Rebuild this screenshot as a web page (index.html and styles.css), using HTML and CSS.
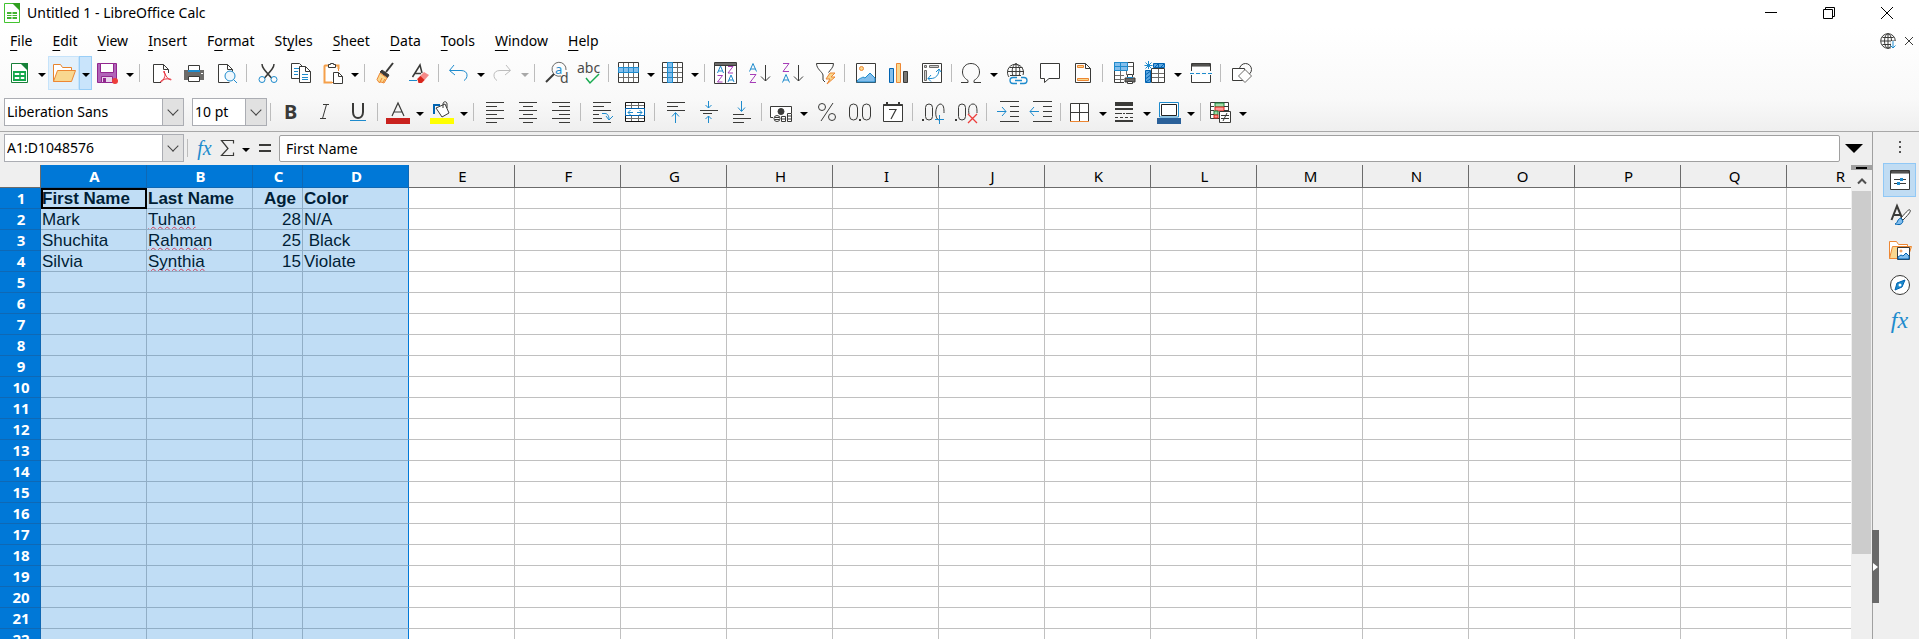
FILE: index.html
```html
<!DOCTYPE html>
<html lang="en">
<head>
<meta charset="utf-8">
<title>Untitled 1 - LibreOffice Calc</title>
<link rel="stylesheet" href="styles.css">
</head>
<body>
<header class="top">
  <div class="titlebar">
    <svg class="ic app-icon" viewBox="0 0 16 20"><path d="M.5.5h9l6 6v13H.5z" fill="#fff" stroke="#43c330"/><path d="M8 0h8v8z" fill="#2f9e1f" stroke="none"/><path d="M3 9h10v7H3z" fill="#43b330" stroke="none"/><path d="M3 11.500h10M3 13.500h10M8 9v7" stroke="#fff"/></svg>
    <h1 class="title">Untitled 1 - LibreOffice Calc</h1>
    <div class="window-buttons">
      <button aria-label="Minimize"><svg class="ic win" viewBox="0 0 14 14"><path d="M1 6.500h12"/></svg></button>
      <button aria-label="Restore"><svg class="ic win" viewBox="0 0 14 14"><path d="M1.500 3.500h9v9h-9zM3.500 3V1.500h9v9H11"/></svg></button>
      <button aria-label="Close"><svg class="ic win" viewBox="0 0 14 14"><path d="M1 1l12 12M13 1L1 13"/></svg></button>
    </div>
  </div>
  <div class="menubar">
    <nav class="menus">
      <button><u>F</u>ile</button><button><u>E</u>dit</button><button><u>V</u>iew</button><button><u>I</u>nsert</button><button>F<u>o</u>rmat</button><button>St<u>y</u>les</button><button><u>S</u>heet</button><button><u>D</u>ata</button><button><u>T</u>ools</button><button><u>W</u>indow</button><button><u>H</u>elp</button>
    </nav>
    <div class="doc-buttons">
      <button aria-label="Update available"><svg class="ic small" viewBox="0 0 16 16"><circle cx="8" cy="8" r="7.300"/><ellipse cx="8" cy="8" rx="3.500" ry="7.300"/><path d="M1 8h14M2.500 4.500h11M2.500 11.500h11M8 1v14"/><path d="M11 8h5v8h-5z" fill="#fdfdfd" stroke="none"/><path class="b" d="M13 8v7M10.500 12.500L13 15l2.500-2.500"/></svg></button>
      <button aria-label="Close document"><svg class="ic tiny" viewBox="0 0 10 10"><path d="M1 1l8 8M9 1L1 9"/></svg></button>
    </div>
  </div>

  <div class="toolbar">
    <button class="tool" aria-label="New"><svg class="ic" viewBox="0 0 24 24"><path d="M3.500 2.500h10l6 6v13h-16z" fill="#fff" stroke="#188038"/><path d="M12 2h8v8z" fill="#18813a" stroke="none"/><path d="M5 10h13v10H5z" fill="#12a84b" stroke="none"/><path d="M7 12.500h4v1H7zM13 12.500h3v1h-3zM7 16.500h4v1H7zM13 16.500h3v1h-3z" stroke="#fff" fill="#fff"/></svg></button><button class="drop" aria-label="New options"></button>
    <button class="tool hot" aria-label="Open"><svg class="ic" viewBox="0 0 24 24"><path d="M1.500 20.500v-17h7l2 3h9v3" fill="#fff" stroke="#e8842c"/><path d="M5.500 9.500h18l-4 11h-18z" fill="#f9d78f" stroke="#ed8733"/></svg></button><button class="drop hot-drop" aria-label="Open options"></button>
    <button class="tool" aria-label="Save"><svg class="ic" viewBox="0 0 24 24"><path d="M1.500 2.500h19v19h-19z" fill="#b164b8" stroke="#92278f"/><path d="M4.500 2.500h13v9h-13z" fill="#fff" stroke="#92278f"/><path d="M5.500 15.500h11v6h-11z" fill="#e9d5ec" stroke="#92278f"/><path d="M7 17h3v4H7z" fill="#92278f" stroke="none"/><circle cx="19" cy="20" r="3" fill="#ed3d3b" stroke="none"/></svg></button><button class="drop" aria-label="Save options"></button>
    <i class="sep"></i>
    <button class="tool" aria-label="Export as PDF"><svg class="ic" viewBox="0 0 24 24"><path d="M12 21.500H4.500v-18h10l5 5V12M14.500 3.500v5h5" fill="#fff"/><path d="M15 12c3 0-1 9-3 9s2-4 9-3c4 1-3 3-6-8z" stroke="#e9303c"/></svg></button>
    <button class="tool" aria-label="Print"><svg class="ic" viewBox="0 0 24 24"><path d="M6.500 10v-5.500h11V10" fill="#fff"/><path d="M2 9h20v10H2z" fill="#6c6b69" stroke="none"/><path d="M6 9h12v2H6z" fill="#1e8bcd" stroke="none"/><path d="M19 12.500h2" stroke="#fff"/><path d="M6.500 15.500h11v5h-11z" fill="#fff"/></svg></button>
    <button class="tool" aria-label="Print preview"><svg class="ic" viewBox="0 0 24 24"><path d="M17.500 11V8.500l-5-5h-9v18h11M12.500 3.500v5h5" fill="#fff"/><circle cx="15" cy="15" r="5" fill="#eef7fd" stroke="#1e8bcd"/><path class="b" d="M18.500 18.500l3.500 3.500"/></svg></button>
    <i class="sep"></i>
    <button class="tool" aria-label="Cut"><svg class="ic" viewBox="0 0 24 24"><path d="M6 3c0 3 1.500 5 9.500 14M18 3c0 3-1.500 5-9.500 14" stroke-width="1.500"/><circle class="b" cx="6" cy="18.500" r="3"/><circle class="b" cx="18" cy="18.500" r="3"/></svg></button>
    <button class="tool" aria-label="Copy"><svg class="ic" viewBox="0 0 24 24"><path d="M2.500 2.500h8l4 4v11h-12z" fill="#fff"/><path class="b" d="M5 7.500h6M5 10.500h4M5 13.500h4"/><path d="M10.500 5.500h6l5 5v11h-11z" fill="#fff"/><path d="M16.500 5.500v5h5"/><path class="b" d="M13 13.500h6M13 16.500h6M13 18.500h6"/></svg></button>
    <button class="tool short" aria-label="Paste"><svg class="ic" viewBox="0 0 24 24"><path d="M12 21.500H3.500v-17h14V10" fill="#fff" stroke="#ed8733"/><path d="M3.500 4.500h14V8M3.500 4.500v17H11" stroke="#f5a04a" stroke-width="2"/><path d="M7.500 6.500v-3h2v-1h3v1h2v3z" fill="#fff"/><path d="M12.500 11.500h5l4 4v7h-9z" fill="#fff"/><path d="M17.500 11.500v4h4"/></svg></button><button class="drop" aria-label="Paste options"></button>
    <i class="sep"></i>
    <button class="tool" aria-label="Clone formatting"><svg class="ic" viewBox="0 0 24 24"><path d="M19 2l-7 9" stroke-width="2"/><path d="M8 9l7 5-1.500 2.500L6 11z" fill="#3a3a38"/><path d="M6 12l7 5-3 5-3-1-2 .5-2-3z" fill="#f9d78f" stroke="#ed8733"/><path d="M8 17l-2 4M11 18l-2 3" stroke="#ed8733"/></svg></button>
    <button class="tool" aria-label="Clear direct formatting"><svg class="ic" viewBox="0 0 24 24"><path d="M5.500 16L13 4l2 8M8 12.500h6" stroke-width="1.500"/><path class="b" d="M2 19.500h8"/><path d="M10 18l7-7 5 3-7 8h-3z" fill="#f58a88" stroke="none"/><path d="M10.500 18l3-3 4 4-3 3h-3z" fill="#d8261c" stroke="none"/></svg></button>
    <i class="sep"></i>
    <button class="tool" aria-label="Undo"><svg class="ic" viewBox="0 0 24 24"><path class="b" d="M7 4L2.500 9.500 8 14M3 9.500h11c8 0 7 8 3 10"/></svg></button><button class="drop" aria-label="Undo options"></button>
    <button class="tool" aria-label="Redo" disabled><svg class="ic" viewBox="0 0 24 24"><path d="M15 4l4.500 5.500L14 14M19 9.500H9c-8 0-7 8-3 10" stroke="#bdbdbd"/></svg></button><button class="drop dim" aria-label="Redo options" disabled></button>
    <i class="sep"></i>
    <button class="tool" aria-label="Find and replace"><svg class="ic" viewBox="0 0 24 24"><path d="M17 15a7 7 0 1 1 5-6" stroke="#6c6b69"/><path d="M10 13l-8 8" stroke-width="2"/><text x="11" y="13" class="blue-t t13">a</text><text x="16" y="22" class="t14">d</text></svg></button>
    <button class="tool" aria-label="Spelling"><svg class="ic" viewBox="0 0 24 24"><text x="0" y="12" class="t14">abc</text><path d="M9 17l4 5 9-9" stroke="#18ab50" stroke-width="1.500"/></svg></button>
    <i class="sep"></i>
    <button class="tool short" aria-label="Row"><svg class="ic" viewBox="0 0 24 24"><path d="M1.500 1.500h20v20h-20z" fill="#fff"/><path d="M6.500 2v19M11.500 2v19M16.500 2v19M2 16.500h19" stroke="#6c6b69"/><path d="M1.500 6.500h20v5h-20z" fill="#83beec" stroke="#1e8bcd"/><path d="M6.500 7v4M11.500 7v4M16.500 7v4" stroke="#1e8bcd"/></svg></button><button class="drop" aria-label="Row options"></button>
    <button class="tool short" aria-label="Column"><svg class="ic" viewBox="0 0 24 24"><path d="M1.500 1.500h20v20h-20z" fill="#fff"/><path d="M2 6.500h19M2 11.500h19M2 16.500h19M16.500 2v19" stroke="#6c6b69"/><path d="M6.500 1.500h5v20h-5z" fill="#83beec" stroke="#1e8bcd"/><path d="M7 6.500h4M7 11.500h4M7 16.500h4" stroke="#1e8bcd"/></svg></button><button class="drop" aria-label="Column options"></button>
    <i class="sep"></i>
    <button class="tool" aria-label="Sort"><svg class="ic" viewBox="0 0 24 24"><path d="M.500 1.500h22v21H.500z" fill="#fff"/><path d="M1 2h21v2H1z" fill="#6c6b69" stroke="none"/><path d="M11.500 4v18M.500 4.500h22"/><path class="b" d="M3.500 12l3-7 3 7M4.500 10h4M14 21l3-7 3 7M15 19h4"/><path class="p" d="M14 5.500h5l-5 6.500h5M3.500 14.500h5l-5 6.500h5"/></svg></button>
    <button class="tool" aria-label="Sort ascending"><svg class="ic" viewBox="0 0 24 24"><path class="b" d="M2.500 10.500l3.500-8 3.500 8M3.500 8h5"/><path class="p" d="M3 13.500h6L3 21.500h6"/><path d="M18.500 4v16M14 15.500l4.500 4.500 4.500-4.500"/></svg></button>
    <button class="tool" aria-label="Sort descending"><svg class="ic" viewBox="0 0 24 24"><path class="p" d="M3 2.500h6L3 10.500h6"/><path class="b" d="M2.500 21.500l3.500-8 3.500 8M3.500 19h5"/><path d="M18.500 4v16M14 15.500l4.500 4.500 4.500-4.500"/></svg></button>
    <button class="tool" aria-label="AutoFilter"><svg class="ic" viewBox="0 0 24 24"><path d="M12 21l-2-2v-5C9.500 11 3.500 8 3.500 2.500h17c0 4-3 6-5 9" fill="#fff"/><path d="M17 12l-4 6h4l-3 5 8-7h-4l4-4z" fill="#f9d78f" stroke="#ed8733"/></svg></button>
    <i class="sep"></i>
    <button class="tool" aria-label="Insert image"><svg class="ic" viewBox="0 0 24 24"><path d="M2.500 2.500h19v19h-19z" fill="#fff"/><path d="M3 21c0-3 5-4 6-5l2 1 5-5 5 5v4z" fill="#83beec" stroke="#1e8bcd"/><circle cx="7.500" cy="7.500" r="2" fill="#f9d78f" stroke="#ed8733"/></svg></button>
    <button class="tool" aria-label="Insert chart"><svg class="ic" viewBox="0 0 24 24"><path d="M2.500 7.500h4v14h-4z" fill="#83beec" stroke="#0063b1"/><path d="M9.500 2.500h4v19h-4z" fill="#f9d78f" stroke="#ed8733"/><path d="M16.500 10.500h4v11h-4z" fill="#797774"/></svg></button>
    <button class="tool" aria-label="Insert pivot table"><svg class="ic" viewBox="0 0 24 24"><path d="M2.500 2.500h19v19h-19z" fill="#fff"/><path d="M4.500 4.500h2v2h-2zM9.500 4.500h9v2h-9zM4.500 9.500h2v10h-2z" fill="#ccc" stroke="#6c6b69"/><path class="b" d="M8 17.500h3c5 0 8-4 8-9M16 11l3-3 2 3M11 14l-3 3.500 3 3"/></svg></button>
    <i class="sep"></i>
    <button class="tool" aria-label="Special character"><svg class="ic" viewBox="0 0 24 24"><path d="M1 21.500h7v-2C4 17 2.500 14 2.500 11 2.500 6 6 2.500 11 2.500s8.500 3.500 8.500 8.500c0 3-1.500 6-5.500 8.500v2h7"/></svg></button><button class="drop" aria-label="Character options"></button>
    <button class="tool" aria-label="Insert hyperlink"><svg class="ic" viewBox="0 0 24 24"><path d="M4 16a8 8 0 1 1 14-2M3 10.500h16M4.500 6.500h13M5 14.500h11M11 2.500V15M8 15C6 9 8 4 11 2.500 14 4 16 9 14 15"/><path class="b" d="M12 16.500H8a3 3 0 0 0 0 6h4M16 16.500h3a3 3 0 0 1 0 6h-4M10 19.500h7" stroke-width="1.300"/></svg></button>
    <button class="tool" aria-label="Insert comment"><svg class="ic" viewBox="0 0 24 24"><path d="M2.500 2.500h19v15H11l-4.500 4v-4h-4z" fill="#fff"/></svg></button>
    <button class="tool" aria-label="Headers and footers"><svg class="ic" viewBox="0 0 24 24"><path d="M4.500 2.500h10l5 5v14h-15z" fill="#fff"/><path d="M14.500 2.500v5h5"/><path d="M6.500 4.500h6v2h-6zM6.500 17.500h11v2h-11z" fill="#f9d78f" stroke="#ed8733"/></svg></button>
    <i class="sep"></i>
    <button class="tool" aria-label="Define print area"><svg class="ic" viewBox="0 0 24 24"><path d="M2.500 1.500h19v20h-19z" fill="#fff"/><path d="M3 14.500h18M3 18.500h18M8.500 10v11M14.500 10v11M15 5.500h6" stroke="#6c6b69"/><path d="M2.500 1.500h13v8h-13z" fill="#83beec" stroke="#1e8bcd"/><path d="M3 5.500h12M8.500 2v7" stroke="#1e8bcd"/><path d="M12 14h12v10H12z" fill="#fafafa" stroke="none"/><path d="M15.500 13.500h5v4h-5z" fill="#fff"/><path d="M13 17h10v4H13z" fill="#6c6b69" stroke="#3a3a38"/><path class="b" d="M15 16.500h6"/><path d="M15.500 20.500h5v2h-5z" fill="#fff"/></svg></button>
    <button class="tool short" aria-label="Freeze rows and columns"><svg class="ic" viewBox="0 0 24 24"><path d="M7.500 7.500h13v14h-13z" fill="#fff"/><path d="M8 12.500h12M8 16.500h12M14.500 8v13" stroke="#6c6b69"/><path d="M9.500 2.500h11v4h-11zM1.500 9.500h5v12h-5z" fill="#5aa5e0" stroke="#0063b1"/><path d="M14.500 3v4M2 13.500l4-3M2 17.500l4-3M2 21l4-3M11 6l3-3M17 6l3-3" stroke="#0063b1"/><path class="b" d="M4.500 0v8M.500 4.500h8M1.500 1.500l6 6M7.500 1.500l-6 6"/></svg></button><button class="drop" aria-label="Freeze options"></button>
    <button class="tool" aria-label="Split window"><svg class="ic" viewBox="0 0 24 24"><path d="M2.500 10V2.500h19V10M2.500 14v7.500h19V14" fill="#fff"/><path d="M3 3h18v2H3z" fill="#6c6b69" stroke="#3a3a38"/><path class="b" d="M1 12.500h22" stroke-dasharray="4 2"/></svg></button>
    <i class="sep"></i>
    <button class="tool" aria-label="Show draw functions"><svg class="ic" viewBox="0 0 24 24"><circle cx="15.500" cy="8.500" r="6"/><path d="M2.500 7.500h12v12h-12z" fill="#fff"/><path d="M15 8.500l6.500 6.500-6.500 6.500L8.500 15z" fill="#fff" stroke="#6c6b69"/></svg></button>
  </div>

  <div class="toolbar">
    <span class="combo font-name"><select aria-label="Font name"><option>Liberation Sans</option></select><i class="chev"></i></span>
    <span class="combo font-size"><select aria-label="Font size"><option>10 pt</option></select><i class="chev"></i></span>
    <i class="sep"></i>
    <button class="tool" aria-label="Bold"><svg class="ic" viewBox="0 0 24 24"><text x="4" y="19" class="t20 bold">B</text></svg></button>
    <button class="tool" aria-label="Italic"><svg class="ic" viewBox="0 0 24 24"><path d="M10 4.500h6M7 18.500h6M13.500 4.500l-4 14"/></svg></button>
    <button class="tool" aria-label="Underline"><svg class="ic" viewBox="0 0 24 24"><path d="M7 3v9c0 8 10 8 10 0V3" stroke-width="2"/><path class="b" d="M4 20.500h16"/></svg></button>
    <i class="sep"></i>
    <button class="tool short" aria-label="Font color"><svg class="ic" viewBox="0 0 24 24"><path d="M6 16l6-13 6 13M8 12h8" stroke-width="1.200"/><path d="M0 18h24v6H0z" fill="#c9211e" stroke="none"/></svg></button><button class="drop" aria-label="Font color options"></button>
    <button class="tool short" aria-label="Highlighting color"><svg class="ic" viewBox="0 0 24 24"><path d="M6 8l9-4 4 9-7 4z" fill="#fff"/><path d="M13 8V4c0-3 4-3 4 0v4"/><path d="M4 14V5h6" stroke="#0063b1" stroke-width="2"/><path d="M0 18h24v6H0z" fill="#ff0" stroke="none"/></svg></button><button class="drop" aria-label="Highlighting options"></button>
    <i class="sep"></i>
    <button class="tool" aria-label="Align left"><svg class="ic" viewBox="0 0 24 24"><path d="M3 2.500h18M3 6.500h11M3 10.500h18M3 14.500h11M3 18.500h18M3 22.500h11"/></svg></button>
    <button class="tool" aria-label="Center horizontally"><svg class="ic" viewBox="0 0 24 24"><path d="M3 2.500h18M7 6.500h10M3 10.500h18M7 14.500h10M3 18.500h18M7 22.500h10"/></svg></button>
    <button class="tool" aria-label="Align right"><svg class="ic" viewBox="0 0 24 24"><path d="M3 2.500h18M10 6.500h11M3 10.500h18M10 14.500h11M3 18.500h18M10 22.500h11"/></svg></button>
    <i class="sep"></i>
    <button class="tool" aria-label="Wrap text"><svg class="ic" viewBox="0 0 24 24"><path d="M3 2.500h18M3 6.500h11M3 10.500h18M3 14.500h6M3 18.500h9M3 22.500h18"/><path class="b" d="M12 13.500h3c3 0 4 3 4 6M16 16l3 4 4-4"/></svg></button>
    <button class="tool" aria-label="Merge and center cells"><svg class="ic" viewBox="0 0 24 24"><path d="M2.500 2.500h19v19h-19z" fill="#fff" stroke="#111"/><path d="M8.500 3v18M15.500 3v18M3 5.500h18M3 18.500h18" stroke="#6c6b69"/><path d="M2.500 8.500h19v7h-19z" fill="#fff" stroke="#0063b1"/><path class="b" d="M5 12.500h5M14 12.500h5M7.500 10L5 12.500 7.500 15M16.500 10l2.500 2.500-2.500 2.500"/></svg></button>
    <i class="sep"></i>
    <button class="tool" aria-label="Align top"><svg class="ic" viewBox="0 0 24 24"><path d="M3 2.500h18M3 6.500h11M3 10.500h18"/><path class="b" d="M11.500 23V13M8 16.500l3.500-4 3.500 4"/></svg></button>
    <button class="tool" aria-label="Center vertically"><svg class="ic" viewBox="0 0 24 24"><path d="M3 10.500h18M6 13.500h9"/><path class="b" d="M11.500 1v7M8.500 5l3 3 3-3M11.500 23v-7M8.500 19l3-3 3 3"/></svg></button>
    <button class="tool" aria-label="Align bottom"><svg class="ic" viewBox="0 0 24 24"><path d="M3 14.500h11M3 18.500h18M3 22.500h11"/><path class="b" d="M11.500 1v10M8 7.500l3.500 4 3.500-4"/></svg></button>
    <i class="sep"></i>
    <button class="tool short" aria-label="Format as currency"><svg class="ic" viewBox="0 0 24 24"><path d="M3 17.500H.500v-11h21V13" fill="#fff"/><circle cx="11" cy="11.500" r="3" fill="#3a3a38"/><circle cx="7" cy="18.500" r="3" fill="#fff"/><path d="M5 17.500h4M5 19.500h4"/><path d="M11.500 16.500h4v5h-4zM11.500 19h4M17.500 13.500h4v8h-4zM17.500 16h4M17.500 19h4" fill="#fff"/></svg></button><button class="drop" aria-label="Currency options"></button>
    <button class="tool" aria-label="Format as percent"><svg class="ic" viewBox="0 0 24 24"><circle cx="7" cy="7" r="3.500"/><circle cx="17" cy="17" r="3.500"/><path d="M18 3L6 21"/></svg></button>
    <button class="tool" aria-label="Format as number"><svg class="ic" viewBox="0 0 24 24"><rect x="1.500" y="4" width="8" height="16" rx="4"/><rect x="14.500" y="4" width="8" height="16" rx="4"/><path d="M11 19h2v2h-2z" fill="#3a3a38" stroke="none"/></svg></button>
    <button class="tool" aria-label="Format as date"><svg class="ic" viewBox="0 0 24 24"><path d="M2.500 4.500h19v17h-19z" fill="#fff"/><path d="M2.500 5h19M6 2v4M18 2v4" stroke-width="2"/><path d="M8 9.500h7L10 19" stroke-width="1.200"/></svg></button>
    <i class="sep"></i>
    <button class="tool" aria-label="Add decimal place"><svg class="ic" viewBox="0 0 24 24"><path d="M0 19h2v2H0z" fill="#3a3a38" stroke="none"/><rect x="3.500" y="4" width="7" height="16" rx="3.500"/><path d="M17 20c-5-1-4-15 1-16 4 0 4 5 4 9"/><path class="b" d="M17.500 15v9M13 19.500h9"/></svg></button>
    <button class="tool" aria-label="Delete decimal place"><svg class="ic" viewBox="0 0 24 24"><path d="M0 19h2v2H0z" fill="#3a3a38" stroke="none"/><rect x="3.500" y="4" width="7" height="16" rx="3.500"/><path d="M14 14c-1-5 0-10 4-10s4 5 4 9"/><path d="M13 14l9 9M22 14l-9 9" stroke="#ed3d3b" stroke-width="1.300"/></svg></button>
    <i class="sep"></i>
    <button class="tool" aria-label="Increase indent"><svg class="ic" viewBox="0 0 24 24"><path d="M4 1.500h19M14 6.500h9M14 11.500h9M14 16.500h9M4 21.500h19"/><path class="b" d="M1 11.500h9M6 7l4 4.500L6 16"/></svg></button>
    <button class="tool" aria-label="Decrease indent"><svg class="ic" viewBox="0 0 24 24"><path d="M4 1.500h19M14 6.500h9M14 11.500h9M14 16.500h9M4 21.500h19"/><path class="b" d="M1 11.500h9M5 7l-4 4.500L5 16"/></svg></button>
    <i class="sep"></i>
    <button class="tool short" aria-label="Borders"><svg class="ic" viewBox="0 0 24 24"><path d="M1.500 21.500v-18h18v18M10.500 4v17M2 12.500h17" fill="#fff"/><path d="M1 21.500h19" stroke="#ed8733"/></svg></button><button class="drop" aria-label="Border options"></button>
    <button class="tool short" aria-label="Border style"><svg class="ic" viewBox="0 0 24 24"><path d="M2 4h18" stroke-width="4"/><path d="M2 9h18" stroke-width="2"/><path d="M2 13.500h18" stroke-dasharray="7 1 2 1"/><path d="M2 17.500h18" stroke-dasharray="3 2"/><path d="M2 21h18" stroke-width="2"/></svg></button><button class="drop" aria-label="Border style options"></button>
    <button class="tool short" aria-label="Border color"><svg class="ic" viewBox="0 0 24 24"><path d="M2.500 2.500h19V17h-19z" fill="#fff" stroke="#1e8bcd"/><path d="M4.500 4.500h15v11h-15z" stroke="#222"/><path d="M0 18h24v6H0z" fill="#2a6099" stroke="none"/></svg></button><button class="drop" aria-label="Border color options"></button>
    <i class="sep"></i>
    <button class="tool short" aria-label="Conditional formatting"><svg class="ic" viewBox="0 0 24 24"><path d="M1.500 2.500h18v16h-18z" fill="#fff"/><path d="M6 3h9v4H6z" fill="#9edba8" stroke="#18813a"/><path d="M6 7h9v4H6z" fill="#ff9797" stroke="#d8261c"/><path d="M5 11h4v4H5z" fill="#9edba8" stroke="#18813a"/><path d="M5 15h4v3H5z" fill="#ff9797" stroke="#d8261c"/><path d="M2 6.500h3M2 10.500h3M2 14.500h3M15 6.500h4M15 10.500h4"/><path d="M10.500 11.500h11v11h-11z" fill="#fff"/><path d="M12 15.500h8M12 18.500h8M18 13l-4 8"/></svg></button><button class="drop" aria-label="Conditional options"></button>
  </div>
</header>

<div class="body">
  <main class="work">
    <div class="formula-bar">
      <span class="combo name-box"><input aria-label="Name box" value="A1:D1048576"><button class="chev" aria-label="Name box list"></button></span>
      <i class="sep"></i>
      <button class="fbtn" aria-label="Function wizard"><span class="fx">fx</span></button>
      <button class="fbtn narrow" aria-label="Select function"><svg class="ic s20" viewBox="0 0 20 20"><path d="M15.500 5.500v-3h-12l6.500 8-6.500 7h12v-3" stroke-width="1.200"/></svg></button>
      <button class="drop" aria-label="Function options"></button>
      <button class="fbtn" aria-label="Formula"><svg class="ic s20" viewBox="0 0 20 20"><path d="M4 7h12M4 13h12" stroke-width="2"/></svg></button>
      <input class="formula" aria-label="Input line" value="First Name">
      <button class="expand" aria-label="Expand formula bar"></button>
    </div>
    <div class="sheet-area">
      <div class="sheet">
        <table class="grid">
          <colgroup id="cols"></colgroup>
          <thead><tr id="head"></tr></thead>
          <tbody id="rows"></tbody>
        </table>
      </div>
      <div class="scroll">
        <div class="splitter"></div>
        <button class="up" aria-label="Scroll up"><svg class="ic tiny" viewBox="0 0 10 10"><path d="M1 7.500l4-4 4 4" stroke="#505050" stroke-width="2"/></svg></button>
        <div class="track"><div class="thumb"></div></div>
      </div>
    </div>
  </main>
  <aside class="sidebar">
    <button class="handle" aria-label="Hide sidebar"></button>
    <button class="dots" aria-label="Sidebar settings"><i></i><i></i><i></i></button>
    <button class="deck on" aria-label="Properties"><svg class="ic" viewBox="0 0 24 24"><path d="M2.500 2.500h19v19h-19z" fill="#fff"/><path d="M3 3h18v2H3z" fill="#6c6b69" stroke="#3a3a38"/><path d="M6 11.500h12M6 15.500h12"/><path d="M12 10h3v3h-3zM9 14h3v3H9z" fill="#1e8bcd" stroke="none"/></svg></button>
    <button class="deck" aria-label="Styles"><svg class="ic" viewBox="0 0 24 24"><path d="M3.500 17L9 3l5 12M5 12h7" stroke-width="2"/><path d="M22 7c1 1 0 3-7 10l-2-2c6-7 8-9 9-8z" fill="#fff"/><path d="M13 15l2 3c-1 4-4 4-8 3 3-1 2-5 6-6z" fill="#83beec" stroke="#0063b1"/></svg></button>
    <button class="deck" aria-label="Gallery"><svg class="ic" viewBox="0 0 24 24"><path d="M1.500 20.500v-17h7l2 3h9v3" fill="#fff" stroke="#ed8733"/><path d="M4.500 8.500h19l-4 12h-18z" fill="#f9d78f" stroke="#ed8733"/><path d="M9.500 9.500h12v12h-12z" fill="#fff"/><path d="M10 21v-2l3-2 2 1 3-3 3 3v3z" fill="#83beec" stroke="#0063b1"/><circle cx="13" cy="13" r="1" stroke="#ed8733"/></svg></button>
    <button class="deck" aria-label="Navigator"><svg class="ic" viewBox="0 0 24 24"><circle cx="12" cy="12" r="9.500" fill="#fff"/><path d="M17 7l-3 7-7 3 2-7z" fill="#1e8bcd" stroke="#0063b1"/><circle cx="12" cy="12" r="1.500" fill="#fff" stroke="none"/></svg></button>
    <button class="deck" aria-label="Functions"><span class="fx big">fx</span></button>
  </aside>
</div>
<script src="sheet.js"></script>
</body>
</html>
```

FILE: styles.css
```css
* { box-sizing: border-box; }

body {
  margin: 0;
  height: 100vh;
  display: flex;
  flex-direction: column;
  overflow: hidden;
  background: #efefef;
  color: #000;
  font: 14px/20px "Noto Sans", "Open Sans", sans-serif;
}

button, input, select {
  margin: 0;
  padding: 0;
  border: 0;
  border-radius: 0;
  background: none;
  color: inherit;
  font: inherit;
}

/* icons */
.ic { display: block; width: 24px; height: 24px; fill: none; stroke: #3a3a38; stroke-width: 1; overflow: visible; }
.ic .b { stroke: #1e8bcd; }
.ic .p { stroke: #a63db8; }
.ic text { fill: #4a4a48; stroke: none; font-family: "Noto Sans", sans-serif; }
.ic .blue-t { fill: #1e8bcd; }
.ic .t13 { font-size: 13px; }
.ic .t14 { font-size: 14px; }
.ic .t20 { font-size: 20px; }
.ic .bold { font-weight: 700; fill: #3a3a38; }
.ic.s20 { width: 20px; height: 20px; }
.ic.small { width: 16px; height: 16px; }
.ic.tiny { width: 10px; height: 10px; }
.ic.win { width: 14px; height: 14px; stroke: #000; }
.ic.app-icon { width: 16px; height: 20px; }

/* title and menus */
.top { flex: none; border-bottom: 1px solid #a8a8a8; background: linear-gradient(#fff 0, #fff 20%, #f9f9f9 75%, #efefef 100%); padding-bottom: 2px; }
.titlebar { display: flex; align-items: center; height: 25px; padding: 0 3px 0 4px; gap: 7px; }
.title { margin: 0; font-size: 14px; font-weight: 400; line-height: 20px; flex: 1; }
.window-buttons { display: flex; }
.window-buttons button { width: 58px; height: 24px; display: grid; place-items: center; }
.menubar { display: flex; justify-content: space-between; align-items: center; height: 31px; padding-left: 10px; padding-right: 5px; }
.menus { display: flex; gap: 20px; }
.menus u { text-underline-offset: 4px; text-decoration-thickness: 1px; }
.doc-buttons { display: flex; align-items: center; gap: 8px; }

/* toolbars */
.toolbar { display: flex; align-items: center; height: 34px; padding-left: 4px; }
.toolbar + .toolbar { margin-top: 5px; }
.tool { flex: none; width: 33px; height: 34px; padding: 0 4px 0 5px; }
.tool:has(+ .drop) { width: 31px; padding: 0 3px 0 4px; }
.drop { flex: none; width: 13px; height: 34px; padding-top: 4px; display: grid; place-items: center; }
.drop::before { content: ""; border: 4px solid transparent; border-top-color: #000; border-bottom: 0; }
.drop.dim::before { border-top-color: #a8a8a8; }
.hot { background: #e2f0fb; box-shadow: inset 0 0 0 1px #c6e3fa; }
.hot-drop { background: #c9e4fb; border: 1px solid #99cef7; }
.sep { flex: none; width: 8px; height: 18px; padding-left: 3px; }
.sep::before { content: ""; display: block; width: 1px; height: 18px; background: #bcbcbc; }

.combo { position: relative; flex: none; display: flex; height: 28px; border: 1px solid #abadb3; background: #fff; }
.combo select, .combo input { appearance: none; flex: 1; min-width: 0; padding: 0 24px 0 2px; outline: 0; }
.combo .chev { position: absolute; right: 0; top: 0; bottom: 0; width: 21px; border-left: 1px solid #abadb3; background: #e1e1e1; display: grid; place-items: center; pointer-events: none; }
.chev::before { content: ""; width: 7px; height: 7px; border: solid #444; border-width: 0 1px 1px 0; transform: rotate(45deg); margin-bottom: 4px; }
.font-name, .name-box { width: 180px; }
.font-size { width: 75px; margin-left: 8px; }

/* formula bar */
.body { flex: 1; min-height: 0; display: flex; }
.work { flex: 1; min-width: 0; display: flex; flex-direction: column; }
.formula-bar { flex: none; display: flex; align-items: center; height: 33px; padding: 2px 0 3px 4px; }
.fbtn { flex: none; width: 25px; height: 28px; display: grid; place-items: center; }
.fbtn.narrow { width: 22px; }
.fx { font: italic 20px/24px "Liberation Serif", serif; color: #1e8bcd; }
.fx.big { font-size: 24px; }
.formula { flex: 1; min-width: 0; height: 27px; margin-left: 2px; padding: 0 6px; border: 1px solid #a0a0a0; border-radius: 2px; background: #fff; outline: 0; }
.expand { flex: none; width: 32px; height: 28px; padding-right: 4px; display: grid; place-items: center; }
.expand::before { content: ""; border: 9px solid transparent; border-top-color: #000; border-bottom: 0; }

/* sheet */
.sheet-area { flex: 1; min-height: 0; display: flex; }
.sheet { flex: 1; min-width: 0; overflow: hidden; background: #fff; }
.grid { table-layout: fixed; width: 0; border-collapse: separate; border-spacing: 0; font: 17px/18px "Liberation Sans", Arial, sans-serif; }
.c-num { width: 41px; }
.c-std { width: 106px; }
.c-narrow { width: 50px; }
.grid th, .grid td { padding: 2px 1px 0; height: 21px; overflow: hidden; white-space: pre; border: solid #c0c0c0; border-width: 0 1px 1px 0; }
.grid th { padding: 0 0 0 2px; }
.grid thead th { height: 23px; background: #efefef; border-color: #6b6b6b; font: 15px/22px "Noto Sans", sans-serif; }
.grid tbody th, .grid thead th.sel { background: #0078d7; color: #fff; border-color: #0f68b4; font: 700 15px/20px "Noto Sans", sans-serif; }
.grid td.sel { background: #c0ddf5; border-color: #91aec6; color: #001e36; }
.grid td.edge { border-right-color: #0078d7; }
.grid td.num { text-align: right; }
.grid td.head { font-weight: 700; }
.grid td.center { text-align: center; padding-left: 6px; }
.grid td.cursor { outline: 2px solid #000; outline-offset: -2px; }
.misspelt { text-decoration: underline wavy #d0405a 1px; text-decoration-skip-ink: none; text-underline-offset: 1px; }

.scroll { flex: none; width: 21px; display: flex; flex-direction: column; background: #efefef; padding-left: 1px; }
.splitter { height: 5px; margin-left: -1px; background: #a0a0a0; display: grid; place-items: center; }
.splitter::before { content: ""; width: 11px; height: 2px; background: #000; }
.up { height: 21px; display: grid; place-items: center; }
.track { flex: 1; }
.thumb { width: 19px; height: 81%; background: #ccc; }

/* sidebar */
.sidebar { position: relative; flex: none; width: 47px; border-left: 1px solid #a0a0a0; padding-left: 10px; display: flex; flex-direction: column; gap: 1px; }
.dots { width: 33px; height: 30px; display: flex; flex-direction: column; align-items: center; justify-content: center; gap: 3px; }
.dots i { width: 2px; height: 2px; background: #555; }
.deck { width: 33px; height: 34px; display: grid; place-items: center; }
.deck.on { background: #c0dcf3; border: 1px solid #90c8f6; }
.handle { position: absolute; left: -1px; top: 398px; width: 7px; height: 73px; background: #696969; display: grid; place-items: center; }
.handle::before { content: ""; border: 4px solid transparent; border-left: 5px solid #fff; border-right: 0; }
```

FILE: sheet.js
```js
const letters = "ABCDEFGHIJKLMNOPQR".split("");
const data = [
  ["First Name", "Last Name", "Age", "Color"],
  ["Mark", "Tuhan", "28", "N/A"],
  ["Shuchita", "Rahman", "25", " Black"],
  ["Silvia", "Synthia", "15", "Violate"]
];
const unknownWords = ["Tuhan", "Rahman", "Synthia"];
const selectedCols = 4;
const rowCount = 22;

function add(parent, tag, cls, text) {
  const el = document.createElement(tag);
  if (cls) el.className = cls;
  if (text) el.textContent = text;
  parent.appendChild(el);
  return el;
}

const cols = document.getElementById("cols");
const head = document.getElementById("head");
add(cols, "col", "c-num");
add(head, "th", "");
letters.forEach((letter, c) => {
  add(cols, "col", letter === "C" ? "c-narrow" : "c-std");
  add(head, "th", c < selectedCols ? "sel" : "", letter).scope = "col";
});

const body = document.getElementById("rows");
for (let r = 0; r < rowCount; r++) {
  const tr = add(body, "tr", "");
  add(tr, "th", "", String(r + 1)).scope = "row";
  letters.forEach((letter, c) => {
    const cls = [];
    if (c < selectedCols) cls.push("sel");
    if (c === selectedCols - 1) cls.push("edge");
    if (r === 0) cls.push("head");
    if (c === 2) cls.push(r === 0 ? "center" : "num");
    if (r === 0 && c === 0) cls.push("cursor");
    const text = data[r] && data[r][c];
    const td = add(tr, "td", cls.join(" "));
    if (!text) return;
    if (unknownWords.includes(text)) add(td, "span", "misspelt", text);
    else td.textContent = text;
  });
}
```
